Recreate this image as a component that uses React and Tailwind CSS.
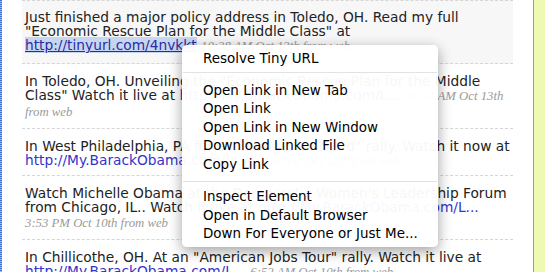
import React from "react";

const TS = "font-['Liberation_Serif',serif] italic text-[12.75px] text-[#9a9a9a]";
const LINK = "text-[#3333cc]";

function Row({ className = "", children }) {
  return (
    <div
      className={
        "border-b border-dashed border-[#d6d6d6] pl-[3px] text-[13.75px] leading-[14px] text-[#222] " +
        className
      }
    >
      {children}
    </div>
  );
}

function Line({ children, className = "" }) {
  return <div className={"whitespace-nowrap " + className}>{children}</div>;
}

function Item({ children }) {
  return <div className="h-[18.5px] pl-[21px] leading-[18.5px] whitespace-nowrap">{children}</div>;
}

function Sep({ className = "" }) {
  return <div className={"mx-px h-px bg-[#e2e2e2] " + className} />;
}

export default function App() {
  return (
    <div className="relative flex h-[272px] w-[545px] overflow-hidden bg-white font-['DejaVu_Sans',sans-serif]">
      <div className="w-[2px] shrink-0 bg-[repeating-linear-gradient(to_bottom,#3d6fd2_0px,#3d6fd2_1px,#9fbcef_1px,#9fbcef_2px)]" />
      <div className="ml-[20px] w-[491px] shrink-0">
        <Row className="border-t bg-[#f7f7f7] pt-[9px] pb-[10px]">
          <Line>Just finished a major policy address in Toledo, OH. Read my full</Line>
          <Line>"Economic Rescue Plan for the Middle Class" at</Line>
          <Line>
            <span className="bg-[#c7d6ef] text-[#2b2ba6] underline">http://tinyurl.com/4nvkkt</span>{" "}
            <span className={TS}>10:38 AM Oct 13th from web</span>
          </Line>
        </Row>
        <Row className="pt-[10px] pb-[8px]">
          <Line>In Toledo, OH. Unveiling the "Economic Rescue Plan for the Middle</Line>
          <Line>
            Class" Watch it live at <span className={LINK}>http://My.BarackObama.com/L...</span>{" "}
            <span className={TS}>10:34 AM Oct 13th</span>
          </Line>
          <Line className="leading-[16px]">
            <span className={TS}>from web</span>
          </Line>
        </Row>
        <Row className="pt-[10px] pb-[7px]">
          <Line>In West Philadelphia, PA for a "Change We Need" rally. Watch it now at</Line>
          <Line>
            <span className={LINK}>http://My.BarackObama.com/L...</span>{" "}
            <span className={TS}>10:30 AM Oct 12th from web</span>
          </Line>
        </Row>
        <Row className="pt-[10px] pb-[8px]">
          <Line>Watch Michelle Obama at the Democratic Women's Leadership Forum</Line>
          <Line>
            from Chicago, IL.. Watch it live at <span className={LINK}>http://My.BarackObama.com/L...</span>
          </Line>
          <Line className="leading-[16px]">
            <span className={TS}>3:53 PM Oct 10th from web</span>
          </Line>
        </Row>
        <Row className="pt-[10px] pb-[8px]">
          <Line>In Chillicothe, OH. At an "American Jobs Tour" rally. Watch it live at</Line>
          <Line>
            <span className={LINK}>http://My.BarackObama.com/L...</span>{" "}
            <span className={TS}>6:52 AM Oct 10th from web</span>
          </Line>
        </Row>
      </div>
      <div className="w-[20px] shrink-0" />
      <div className="w-px shrink-0 bg-[#a39f74]" />
      <div className="flex-1 bg-[#eefab4]" />

      <div className="absolute left-[182px] top-[45px] h-[202px] w-[256px] rounded-[5px] bg-white/[0.96] pt-[5px] text-[13.45px] text-black shadow-[0_4px_14px_rgba(0,0,0,0.38)]">
        <Item>Resolve Tiny URL</Item>
        <Sep className="mt-[3px] mb-[9px]" />
        <Item>Open Link in New Tab</Item>
        <Item>Open Link</Item>
        <Item>Open Link in New Window</Item>
        <Item>Download Linked File</Item>
        <Item>Copy Link</Item>
        <Sep className="mt-[7px] mb-[6px]" />
        <Item>Inspect Element</Item>
        <Item>Open in Default Browser</Item>
        <Item>Down For Everyone or Just Me...</Item>
      </div>
    </div>
  );
}
